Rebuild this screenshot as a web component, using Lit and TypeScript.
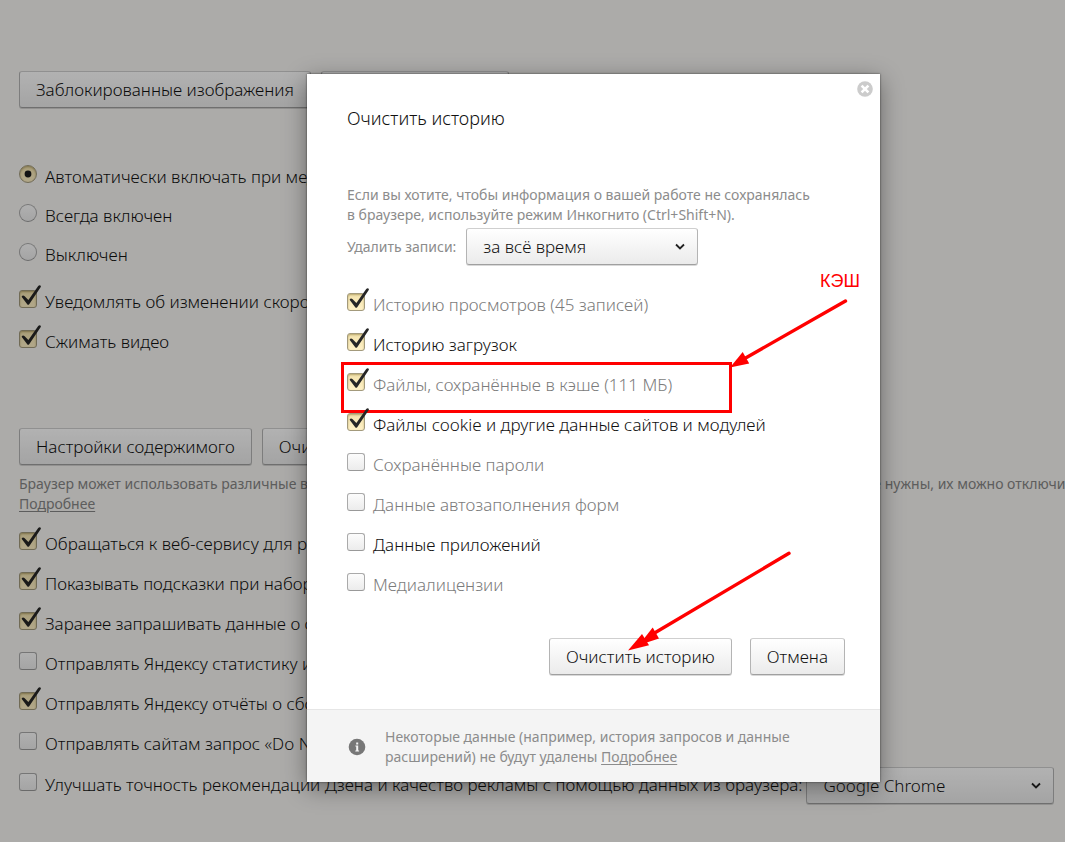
import { LitElement, html, svg, css, nothing } from "lit";
import { customElement, property } from "lit/decorators.js";

const FONT = css`"Noto Sans", "Open Sans", sans-serif`;

const controls = css`
  * {
    box-sizing: border-box;
  }
  .btn,
  .select {
    font-family: ${FONT};
    font-size: 17px;
    font-weight: 300;
    line-height: 24px;
    height: 37px;
    color: #111;
    border: 1px solid #b4b4b4;
    border-top-color: #cfcfcf;
    border-bottom-color: #a0a0a0;
    border-radius: 3px;
    background: linear-gradient(#fff, #ebebeb);
    box-shadow: 0 1px 0 rgba(0, 0, 0, 0.15);
    white-space: nowrap;
  }
  .btn {
    padding: 1px 16px 0;
    margin: 0;
  }
  .picker {
    position: relative;
    display: inline-flex;
    flex: none;
  }
  .select {
    appearance: none;
    width: 100%;
    margin: 0;
    padding: 1px 32px 0 16px;
  }
  .chevron {
    position: absolute;
    right: 12px;
    top: 14px;
    width: 12px;
    height: 9px;
    pointer-events: none;
  }
  .link {
    color: inherit;
    text-decoration: underline;
    text-underline-offset: 2px;
  }
`;

const chevron = html`<svg class="chevron" viewBox="0 0 12 9" aria-hidden="true">
  <path d="M2 2.5 6 6.5 10 2.5" fill="none" stroke="#222" stroke-width="1.8" />
</svg>`;

@customElement("choice-item")
export class ChoiceItem extends LitElement {
  @property() kind = "checkbox";
  @property() label = "";
  @property() group = "";
  @property({ type: Boolean }) checked = false;
  @property({ type: Boolean }) muted = false;

  static styles = css`
    :host {
      display: block;
      font-family: ${FONT};
      font-size: 17px;
      font-weight: 300;
      line-height: 24px;
    }
    .item {
      display: flex;
      align-items: center;
      gap: 8px;
      color: #111;
      white-space: nowrap;
    }
    .muted {
      color: #7c7c7c;
    }
    .box {
      position: relative;
      flex: none;
      width: 18px;
      height: 18px;
      margin-bottom: 6px;
    }
    .input {
      appearance: none;
      display: block;
      box-sizing: border-box;
      width: 18px;
      height: 18px;
      margin: 0;
      border: 1px solid #aaa;
      border-bottom-color: #999;
      border-radius: 3px;
      background: linear-gradient(#fcfcfc, #ececec);
    }
    .input[type="radio"] {
      border-radius: 50%;
    }
    .input:checked {
      border-color: #a39a7c;
      background: linear-gradient(#f3e3ae, #fff1c6);
      box-shadow: inset 0 1px 2px rgba(90, 70, 0, 0.4);
    }
    .mark {
      position: absolute;
      left: 0;
      top: 0;
      width: 18px;
      height: 18px;
      overflow: visible;
      pointer-events: none;
    }
  `;

  render() {
    const mark =
      this.kind === "radio"
        ? svg`<circle cx="9" cy="9" r="3.4" fill="#1c1c1c" />`
        : svg`<path d="M2.6 6.8 Q3.6 4.8 5.4 6 L9.4 10 L19.2 -4 Q20.8 -5.6 21.9 -4 Q22 -3.4 21.6 -2.8 L10.2 14.2 Q9.2 15.4 8.2 14.2 Z" fill="#262626" />`;
    return html`<label class="item ${this.muted ? "muted" : ""}">
      <span class="box">
        <input class="input" type=${this.kind} name=${this.group || nothing} .checked=${this.checked} />
        ${this.checked ? html`<svg class="mark" viewBox="0 0 18 18" aria-hidden="true">${mark}</svg>` : nothing}
      </span>
      <span>${this.label}</span>
    </label>`;
  }
}

@customElement("settings-page")
export class SettingsPage extends LitElement {
  static styles = [
    controls,
    css`
      :host {
        display: block;
        font-family: ${FONT};
        padding: 71px 11px 36px 19px;
        overflow: hidden;
      }
      .buttons {
        display: flex;
        gap: 10px;
      }
      .rows {
        display: grid;
        grid-auto-rows: 40px;
        align-items: center;
      }
      .modes {
        grid-auto-rows: 39px;
        margin-top: 49px;
      }
      .turbo {
        margin-top: 8px;
      }
      .privacy {
        margin-top: 66px;
      }
      .hint {
        margin: 9px 0 10px;
        font-size: 14px;
        line-height: 20px;
        color: #868686;
        white-space: nowrap;
      }
      .import {
        display: flex;
        align-items: center;
        gap: 4px;
        height: 42px;
      }
      .import .picker {
        flex: 1;
      }
    `,
  ];

  render() {
    return html`
      <div class="buttons">
        <button class="btn">Заблокированные изображения</button>
        <button class="btn">Настроить шрифты</button>
      </div>
      <div class="rows modes">
        <choice-item kind="radio" checked label="Автоматически включать при медленном"></choice-item>
        <choice-item kind="radio" label="Всегда включен"></choice-item>
        <choice-item kind="radio" label="Выключен"></choice-item>
      </div>
      <div class="rows turbo">
        <choice-item checked label="Уведомлять об изменении скорости"></choice-item>
        <choice-item checked label="Сжимать видео"></choice-item>
      </div>
      <div class="buttons privacy">
        <button class="btn">Настройки содержимого</button>
        <button class="btn">Очистить историю</button>
      </div>
      <p class="hint">
        Браузер может использовать различные веб-службы, чтобы сделать работу в интернете удобнее. Если данные службы вам не нужны, их можно отключить.<br />
        <a class="link" href="#">Подробнее</a>
      </p>
      <div class="rows">
        <choice-item checked label="Обращаться к веб-сервису для решения"></choice-item>
        <choice-item checked label="Показывать подсказки при наборе"></choice-item>
        <choice-item checked label="Заранее запрашивать данные о страницах"></choice-item>
        <choice-item label="Отправлять Яндексу статистику использования"></choice-item>
        <choice-item checked label="Отправлять Яндексу отчёты о сбоях"></choice-item>
        <choice-item label="Отправлять сайтам запрос «Do Not Track»"></choice-item>
      </div>
      <div class="import">
        <choice-item label="Улучшать точность рекомендаций Дзена и качество рекламы с помощью данных из браузера:"></choice-item>
        <span class="picker">
          <select class="select" aria-label="Браузер">
            <option>Google Chrome</option>
          </select>
          ${chevron}
        </span>
      </div>
    `;
  }
}

@customElement("clear-history-dialog")
export class ClearHistoryDialog extends LitElement {
  static styles = [
    controls,
    css`
      :host {
        display: block;
        position: relative;
        font-family: ${FONT};
        background: #fff;
        box-shadow: 0 0 2px rgba(0, 0, 0, 0.6), 0 6px 22px rgba(0, 0, 0, 0.4);
      }
      .body {
        padding: 32px 35px 34px 40px;
      }
      .title {
        margin: 0;
        font-size: 18px;
        line-height: 24px;
        font-weight: 300;
        color: #111;
      }
      .note {
        margin: 55px 0 3px;
        font-size: 14px;
        line-height: 20px;
        color: #8c8c8c;
      }
      .period {
        display: flex;
        align-items: center;
        gap: 10px;
        font-size: 14px;
        line-height: 20px;
        color: #8c8c8c;
      }
      .period .picker {
        width: 232px;
      }
      .rows {
        display: grid;
        grid-auto-rows: 40px;
        align-items: center;
        margin-top: 20px;
      }
      .marked {
        position: relative;
        align-self: stretch;
        display: grid;
        align-items: center;
      }
      .frame {
        position: absolute;
        inset: -3px 113px -8px -6px;
        border: 3px solid #f00;
        pointer-events: none;
      }
      .actions {
        display: flex;
        justify-content: flex-end;
        gap: 18px;
        margin-top: 33px;
      }
      .footer {
        display: flex;
        align-items: center;
        gap: 19px;
        padding: 17px 40px 15px;
        border-top: 1px solid #e6e6e6;
        background: #f4f4f4;
        font-size: 14px;
        line-height: 20px;
        color: #8c8c8c;
      }
      .footer-text {
        margin: 0;
        max-width: 420px;
      }
      .info {
        flex: none;
        width: 19px;
        height: 19px;
      }
      .close {
        position: absolute;
        right: 7px;
        top: 7px;
        width: 16px;
        height: 16px;
        padding: 0;
        border: 0;
        background: none;
      }
      .close-icon {
        display: block;
        width: 16px;
        height: 16px;
      }
      .arrows {
        position: absolute;
        left: 0;
        top: 0;
        width: 573px;
        height: 709px;
        pointer-events: none;
      }
      .callout {
        position: absolute;
        left: 513px;
        top: 195px;
        font-family: "Liberation Sans", Arial, sans-serif;
        font-size: 18px;
        line-height: 24px;
        color: #f00;
      }
    `,
  ];

  render() {
    return html`
      <div class="body">
        <h1 class="title">Очистить историю</h1>
        <p class="note">
          Если вы хотите, чтобы информация о вашей работе не сохранялась<br />в браузере, используйте режим Инкогнито
          (Ctrl+Shift+N).
        </p>
        <div class="period">
          <label for="period">Удалить записи:</label>
          <span class="picker">
            <select class="select" id="period">
              <option>за всё время</option>
            </select>
            ${chevron}
          </span>
        </div>
        <div class="rows">
          <choice-item checked muted label="Историю просмотров (45 записей)"></choice-item>
          <choice-item checked label="Историю загрузок"></choice-item>
          <div class="marked">
            <choice-item checked muted label="Файлы, сохранённые в кэше (111 МБ)"></choice-item>
            <div class="frame"></div>
          </div>
          <choice-item checked label="Файлы cookie и другие данные сайтов и модулей"></choice-item>
          <choice-item muted label="Сохранённые пароли"></choice-item>
          <choice-item muted label="Данные автозаполнения форм"></choice-item>
          <choice-item label="Данные приложений"></choice-item>
          <choice-item muted label="Медиалицензии"></choice-item>
        </div>
        <div class="actions">
          <button class="btn">Очистить историю</button>
          <button class="btn">Отмена</button>
        </div>
      </div>
      <div class="footer">
        <svg class="info" viewBox="0 0 19 19" aria-hidden="true">
          <circle cx="10" cy="9" r="8.3" fill="#777" />
          <path d="M9.2 4.4h2v2h-2zM8.4 7.6h2.8v5h.9v1H8.300v-1h.9V8.600h-.8z" fill="#f4f4f4" />
        </svg>
        <p class="footer-text">
          Некоторые данные (например, история запросов и данные расширений) не будут удалены
          <a class="link" href="#">Подробнее</a>
        </p>
      </div>
      <button class="close" aria-label="Закрыть">
        <svg class="close-icon" viewBox="0 0 16 16" aria-hidden="true">
          <circle cx="8" cy="8" r="7.8" fill="#ccc" />
          <path d="M4.6 4.6 11.4 11.4M11.4 4.6 4.6 11.4" stroke="#fff" stroke-width="2.6" />
        </svg>
      </button>
      <svg class="arrows" viewBox="0 0 573 709" aria-hidden="true">
        <g stroke="#f00" stroke-width="3.4" stroke-linecap="round">
          <path d="M538.5 227 436 285.5" />
          <path d="M482 479.300 345 560.5" />
        </g>
        <g fill="#f00">
          <path d="M423 293.500 435.700 278 442.200 289.500Z" />
          <path d="M332 571 345.700 553.500 352 564.500Z" />
          <path d="M321 576.500 335 560 342 571.300Z" />
        </g>
      </svg>
      <span class="callout">КЭШ</span>
    `;
  }
}

@customElement("app-root")
export class AppRoot extends LitElement {
  static styles = css`
    :host {
      display: block;
      position: relative;
      min-height: 100vh;
      overflow: hidden;
      background: #f6f5f2;
    }
    .overlay {
      position: absolute;
      inset: 0;
      box-sizing: border-box;
      padding: 74px 185px 60px 307px;
      background: rgba(0, 0, 0, 0.3);
    }
  `;

  render() {
    return html`
      <settings-page></settings-page>
      <div class="overlay">
        <clear-history-dialog role="dialog" aria-modal="true" aria-label="Очистить историю"></clear-history-dialog>
      </div>
    `;
  }
}
